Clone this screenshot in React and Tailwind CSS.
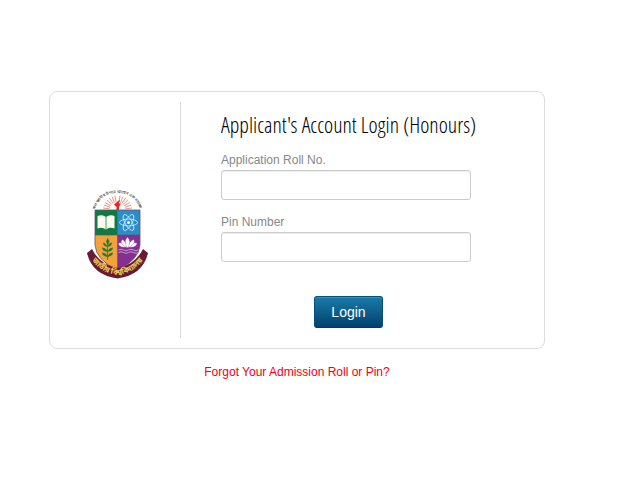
const RAYS = [-82, -70, -58, -46, -34, -22, -10, 10, 22, 34, 46, 58, 70, 82];

function Crest() {
  return (
    <svg viewBox="0 0 61 90" className="h-[90px] w-[61px] overflow-visible" role="img" aria-label="National University crest">
      <defs>
        <path id="motto" d="M8 20.500 Q14 4 30.500 4 Q47 4 53 20.500" />
        <path id="ribbon" d="M2.500 67.500 Q12 83.500 30.500 86 Q49 83.500 58.500 67.500" />
        <clipPath id="shield">
          <path d="M8 21H53V56Q52 71 30.500 81Q9 71 8 56Z" />
        </clipPath>
      </defs>
      <text fontSize="4" fill="#222" textAnchor="middle" fontFamily="'Noto Sans Bengali', 'Noto Sans', sans-serif">
        <textPath href="#motto" startOffset="50%">সকল জ্ঞানীর উপরে আছেন এক মহাজ্ঞানী</textPath>
      </text>
      {RAYS.map((a) => (
        <path key={a} d="M30.500 13V6.500" stroke="#ee8c80" strokeWidth=".9" transform={`rotate(${a} 30.500 21)`} />
      ))}
      <path d="M29.500 21V18L27 15.500L33 10.500L32 14.500L34 14.500L32 18V21Z" fill="#e5281f" />
      <g clipPath="url(#shield)">
        <path d="M8 21H30.500V46H8Z" fill="#107a45" />
        <path d="M30.500 21H53V46H30.500Z" fill="#2a8dca" />
        <path d="M8 46H30.500V82H8Z" fill="#f3a13a" />
        <path d="M30.500 46H53V82H30.500Z" fill="#842f91" />
        <path d="M30.500 21V82M8 46H53" stroke="#654f68" strokeWidth=".7" />
      </g>
      <path d="M8 21H53V56Q52 71 30.500 81Q9 71 8 56Z" fill="none" stroke="#66536b" strokeWidth=".8" />
      <path d="M10.500 27Q15.500 25 19 28Q23 25 27.500 27V39.500Q22 37.500 19 40.500Q15 37.500 10.500 39.500Z" fill="#fffdf0" />
      <path d="M19 28V40" stroke="#16834b" strokeWidth=".8" />
      <g fill="none" stroke="#d8f0fc" strokeWidth=".8">
        <ellipse cx="41.500" cy="33.500" rx="9" ry="3.400" />
        <ellipse cx="41.500" cy="33.500" rx="9" ry="3.400" transform="rotate(60 41.500 33.500)" />
        <ellipse cx="41.500" cy="33.500" rx="9" ry="3.400" transform="rotate(120 41.500 33.500)" />
      </g>
      <circle cx="41.500" cy="33.500" r="1.500" fill="#fff" />
      <g fill="#237a35">
        <path d="M20.500 49L22.500 52L21 56L19 53Z" />
        <path d="M20.500 58Q16 57 16 53.500Q20 55 20.500 58Q21 54 25 53.500Q25 57 20.500 58Z" />
        <path d="M20.500 63Q15 62 15 58.500Q20 59 20.500 63Q21 59 26 58.500Q26 62 20.500 63Z" />
        <path d="M20.500 68Q15 67 15 63.500Q20 64 20.500 68Q21 64 26 63.500Q26 67 20.500 68Z" />
      </g>
      <path d="M20.500 53V71" stroke="#237a35" strokeWidth=".8" />
      <g fill="#fff" stroke="#842f91" strokeWidth=".3">
        <path d="M40 58Q31 59 31.500 54Q37 53 40 58Q43 53 50 54Q50 59 41 58Z" />
        <path d="M40.500 59Q32 55 35 50.500Q39 52 40.500 59Q42 52 47 50.500Q49 55 40.500 59Z" />
        <path d="M40.500 59Q36 53 40.500 48Q45 53 40.500 59Z" />
      </g>
      <path d="M31.500 61q2.500-1.500 5 0t5 0t5 0t5 0M31.500 63.500q2.500-1.500 5 0t5 0t5 0t5 0" fill="none" stroke="#c59acb" strokeWidth="1" />
      <path d="M5 60Q13 76 30.500 79Q48 76 56 60L61 64Q56 86 30.500 89.500Q5 86 0 64Z" fill="#681b36" />
      <text fontSize="7.500" fontWeight="bold" fill="#f2d552" textAnchor="middle" fontFamily="'Noto Sans Bengali', 'Noto Sans', sans-serif">
        <textPath href="#ribbon" startOffset="50%">জাতীয় বিশ্ববিদ্যালয়</textPath>
      </text>
    </svg>
  );
}

function Field({ id, label, type }) {
  return (
    <div className="mb-3">
      <label htmlFor={id} className="block text-[12px] leading-5 text-[#888]">{label}</label>
      <input
        id={id}
        type={type}
        className="block h-[30px] w-full rounded-[3px] border border-[#ccc] bg-white px-2 text-[13px] text-[#555] shadow-[inset_0_1px_1px_rgba(0,0,0,0.075)] outline-none focus:border-[#52a8ec]"
      />
    </div>
  );
}

export default function App() {
  return (
    <main className="min-h-screen bg-white pt-[91px] pr-[82px] pl-[49px] font-['Liberation_Sans',Arial,sans-serif]">
      <section className="flex rounded-lg border border-[#ddd] py-[10px]">
        <div className="flex w-[131px] shrink-0 items-center justify-center border-r border-[#ddd] pt-7 pl-1">
          <Crest />
        </div>
        <form className="min-w-0 flex-1 pb-[10px] pl-10" onSubmit={(e) => e.preventDefault()}>
          <h1 className="mt-1 mb-2 text-[22px] leading-9 font-light whitespace-nowrap text-black font-['Open_Sans_Condensed_Light','OpenSans-CondensedLight','Liberation_Sans_Narrow',sans-serif]">
            Applicant's Account Login (Honours)
          </h1>
          <div className="w-[250px]">
            <Field id="roll" label="Application Roll No." type="text" />
            <Field id="pin" label="Pin Number" type="password" />
          </div>
          <button type="submit" className="mt-[34px] ml-[93px] block h-8 w-[69px] rounded-[3px] border border-[#045078] border-b-[#003b61] bg-linear-to-b from-[#1b7ba8] to-[#04416f] text-[14px] leading-5 text-white shadow-[inset_0_1px_0_rgba(255,255,255,0.15)]">
            Login
          </button>
        </form>
      </section>
      <p className="mt-[13px] text-center text-[12px] leading-5">
        <a href="#forgot" className="text-[#f00010]">Forgot Your Admission Roll or Pin?</a>
      </p>
    </main>
  );
}
